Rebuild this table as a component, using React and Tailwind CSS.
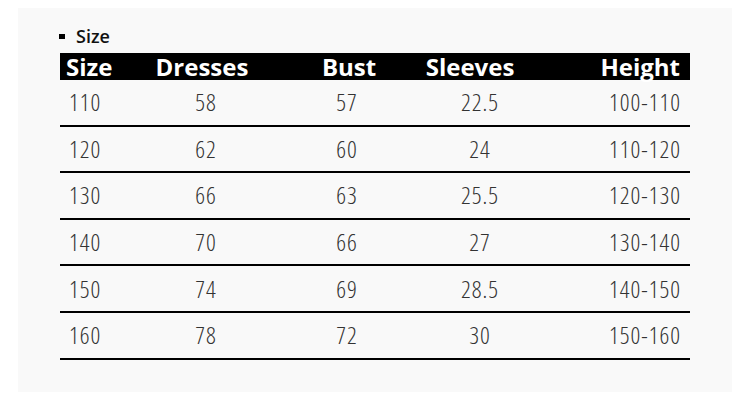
const rows = [
  ["110", "58", "57", "22.5", "100-110"],
  ["120", "62", "60", "24", "110-120"],
  ["130", "66", "63", "25.5", "120-130"],
  ["140", "70", "66", "27", "130-140"],
  ["150", "74", "69", "28.5", "140-150"],
  ["160", "78", "72", "30", "150-160"],
];

export default function App() {
  return (
    <div className="w-[750px] h-[401px] bg-white pt-[8px] pl-[18px]">
      <div className="w-[714px] h-[384px] bg-[#f9f9f9] pt-[16px] pl-[41px]" style={{ fontFamily: '"Open Sans", sans-serif' }}>
        <div className="flex items-center h-[24px]">
          <div className="w-[6px] h-[5px] bg-black" />
          <span className="ml-[11px] text-[18px] font-semibold text-[#111] leading-[24px]">Size</span>
        </div>
        <div className="w-[630px] mt-[5px] ml-[1px]">
          <div className="flex h-[27px] bg-black text-white text-[24px] font-bold leading-[27px] items-end">
            <div className="w-[60px] shrink-0 pl-[6px] flex">Size</div>
            <div className="w-[164px] shrink-0 flex justify-center">Dresses</div>
            <div className="w-[130px] shrink-0 flex justify-center">Bust</div>
            <div className="w-[112px] shrink-0 flex justify-center">Sleeves</div>
            <div className="w-[164px] shrink-0 flex justify-end pr-[10px]">Height</div>
          </div>
          {rows.map((r, i) => (
            <div key={i} className="flex items-center h-[46.6px] border-b-2 border-black text-[24px] font-light text-[#333] [font-stretch:80%] tracking-[1px]">
              <div className="w-[80px] shrink-0 pl-[9px] flex">{r[0]}</div>
              <div className="w-[132px] shrink-0 flex justify-center">{r[1]}</div>
              <div className="w-[150px] shrink-0 flex justify-center">{r[2]}</div>
              <div className="w-[116px] shrink-0 flex justify-center">{r[3]}</div>
              <div className="w-[152px] shrink-0 flex justify-end pr-[9px]">{r[4]}</div>
            </div>
          ))}
        </div>
      </div>
    </div>
  );
}
